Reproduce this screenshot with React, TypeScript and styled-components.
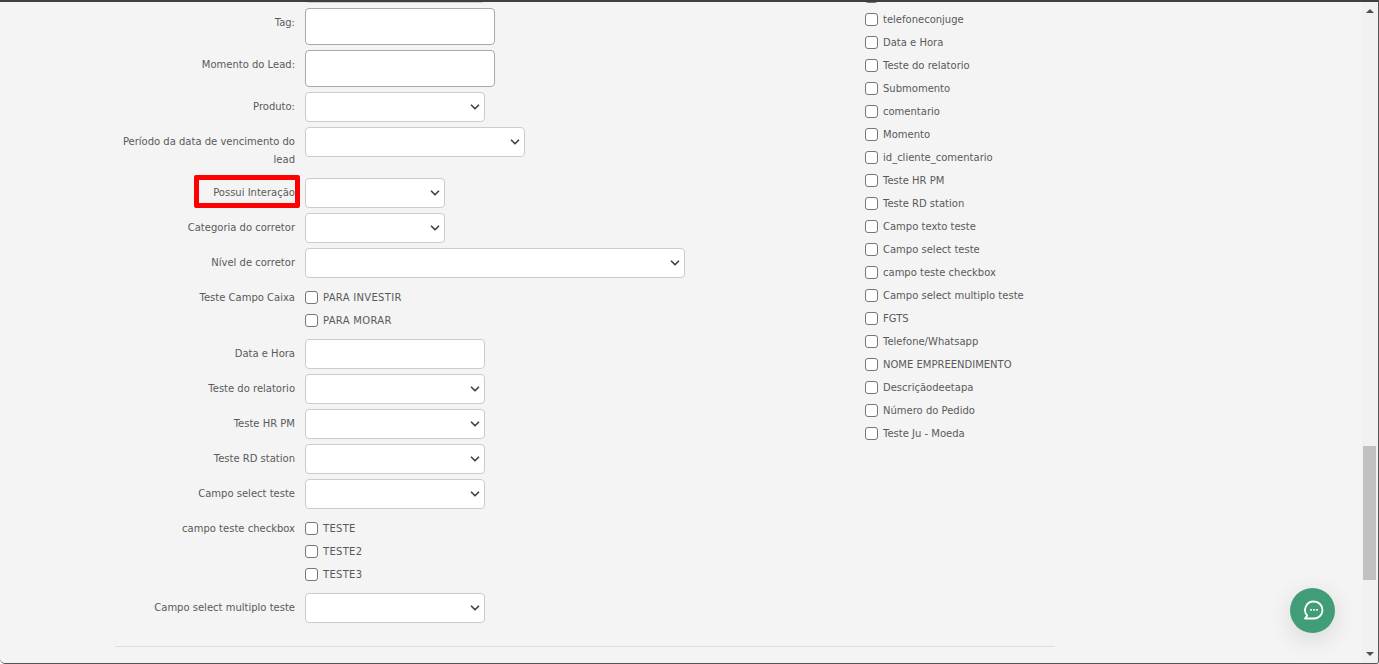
import React from "react";
import styled, { createGlobalStyle } from "styled-components";
import { ChevronDown } from "lucide-react";

const Global = createGlobalStyle`
  html, body { margin: 0; padding: 0; height: 100%; overflow: hidden; }
  #root { height: 100%; }
`;

const Frame = styled.div`
  height: 664px;
  box-sizing: border-box;
  display: flex;
  position: relative;
  overflow: hidden;
  background: #f4f4f4;
  border-top: 2px solid #3f3f3f;
  border-bottom: 1px solid #555;
  border-right: 1px solid #555;
  border-bottom-left-radius: 5px;
  border-bottom-right-radius: 3px;
  font-family: "DejaVu Sans", Verdana, sans-serif;
  font-size: 10px;
  color: #5a5a5a;
`;

const Viewport = styled.div`
  flex: 1;
  min-width: 0;
  overflow: hidden;
`;

const Content = styled.div`
  width: 940px;
  margin: -29px 0 0 115px;
`;

const Columns = styled.div`
  display: grid;
  grid-template-columns: 750px 1fr;
`;

const FormColumn = styled.div`
  display: flex;
  flex-direction: column;
  gap: 5px;
`;

const Row = styled.div`
  display: flex;
  gap: 10px;
  align-items: flex-start;
`;

const Label = styled.div`
  position: relative;
  width: 180px;
  flex: none;
  box-sizing: border-box;
  padding: 6px 0 4px;
  text-align: right;
  line-height: 18px;
`;

const Highlight = styled.span`
  position: absolute;
  top: -3px;
  right: -5px;
  width: 106px;
  height: 33px;
  box-sizing: border-box;
  border: 5px solid #f00;
  border-radius: 2px;
  pointer-events: none;
`;

const TextInput = styled.input<{ $w: number; $h: number; $strong?: boolean }>`
  display: block;
  box-sizing: border-box;
  width: ${(p) => p.$w}px;
  height: ${(p) => p.$h}px;
  padding: 0 8px;
  background: #fff;
  border: 1px solid ${(p) => (p.$strong ? "#a9a9a9" : "#ccc")};
  border-radius: 4px;
  outline: none;
`;

const SelectWrap = styled.div<{ $w: number }>`
  position: relative;
  width: ${(p) => p.$w}px;
  height: 30px;
  svg {
    position: absolute;
    top: 8px;
    right: 3px;
    color: #444;
    pointer-events: none;
  }
`;

const NativeSelect = styled.select`
  display: block;
  appearance: none;
  box-sizing: border-box;
  width: 100%;
  height: 100%;
  background: #fff;
  border: 1px solid #ccc;
  border-radius: 4px;
  outline: none;
`;

const CheckGroup = styled.div`
  display: flex;
  flex-direction: column;
  gap: 5px;
  padding: 5px 0;
`;

const CheckItem = styled.label`
  display: flex;
  align-items: center;
  gap: 5px;
  height: 18px;
  white-space: nowrap;
`;

const CheckText = styled.span<{ $spaced?: boolean }>`
  padding-top: 2px;
  line-height: 18px;
  letter-spacing: ${(p) => (p.$spaced ? "0.3px" : "normal")};
`;

const CheckBox = styled.input.attrs({ type: "checkbox" })`
  appearance: none;
  flex: none;
  width: 13px;
  height: 13px;
  margin: 0;
  background: #fff;
  border: 1px solid #767676;
  border-radius: 3px;
`;

const SideList = styled.div`
  display: flex;
  flex-direction: column;
  gap: 5px;
  margin-top: 14px;
`;

const Divider = styled.hr`
  margin: 23px 0 0;
  border: 0;
  border-top: 1px solid #ddd;
`;

const Scrollbar = styled.div`
  position: relative;
  flex: none;
  width: 16px;
  background: #f1f1f1;
`;

const Arrow = styled.span<{ $down?: boolean }>`
  position: absolute;
  left: 4px;
  width: 0;
  height: 0;
  border-left: 4px solid transparent;
  border-right: 4px solid transparent;
  ${(p) =>
    p.$down
      ? "bottom: 7px; border-top: 4px solid #505050;"
      : "top: 7px; border-bottom: 4px solid #505050;"}
`;

const Thumb = styled.div`
  position: absolute;
  left: 1px;
  top: 444px;
  width: 13px;
  height: 134px;
  background: #c1c1c1;
`;

const ChatButton = styled.button`
  position: absolute;
  left: 1290px;
  top: 586px;
  width: 45px;
  height: 45px;
  padding: 0;
  display: flex;
  align-items: center;
  justify-content: center;
  border: 0;
  border-radius: 50%;
  background: #419c78;
  color: #fff;
  box-shadow: 0 6px 24px rgba(0, 0, 0, 0.12);
`;

const ChatIcon = () => (
  <svg width="24" height="24" viewBox="0 0 24 24" fill="none" stroke="currentColor" strokeWidth="1.8" strokeLinejoin="round">
    <path d="M13 2.5a8.5 8.5 0 1 1 0 17H4l2.2-2.9A8.5 8.5 0 0 1 13 2.5z" />
    <g fill="currentColor" stroke="none">
      <rect x="9.2" y="10" width="1.7" height="1.7" />
      <rect x="12.2" y="10" width="1.7" height="1.7" />
      <rect x="15.2" y="10" width="1.7" height="1.7" />
    </g>
  </svg>
);

const Select = ({ w }: { w: number }) => (
  <SelectWrap $w={w}>
    <NativeSelect />
    <ChevronDown size={14} strokeWidth={3} />
  </SelectWrap>
);

const Checks = ({ items }: { items: string[] }) => (
  <CheckGroup>
    {items.map((t) => (
      <CheckItem key={t}>
        <CheckBox />
        <CheckText $spaced>{t}</CheckText>
      </CheckItem>
    ))}
  </CheckGroup>
);

const side = [
  "",
  "telefoneconjuge",
  "Data e Hora",
  "Teste do relatorio",
  "Submomento",
  "comentario",
  "Momento",
  "id_cliente_comentario",
  "Teste HR PM",
  "Teste RD station",
  "Campo texto teste",
  "Campo select teste",
  "campo teste checkbox",
  "Campo select multiplo teste",
  "FGTS",
  "Telefone/Whatsapp",
  "NOME EMPREENDIMENTO",
  "Descriçãodeetapa",
  "Número do Pedido",
  "Teste Ju - Moeda",
];

export default function App() {
  return (
    <Frame>
      <Global />
      <Viewport>
        <Content>
          <Columns>
            <FormColumn>
              <Row>
                <Label />
                <Select w={180} />
              </Row>
              <Row>
                <Label>Tag:</Label>
                <TextInput $w={190} $h={37} $strong />
              </Row>
              <Row>
                <Label>Momento do Lead:</Label>
                <TextInput $w={190} $h={37} $strong />
              </Row>
              <Row>
                <Label>Produto:</Label>
                <Select w={180} />
              </Row>
              <Row>
                <Label>Período da data de vencimento do lead</Label>
                <Select w={220} />
              </Row>
              <Row>
                <Label>
                  Possui Interação
                  <Highlight />
                </Label>
                <Select w={140} />
              </Row>
              <Row>
                <Label>Categoria do corretor</Label>
                <Select w={140} />
              </Row>
              <Row>
                <Label>Nível de corretor</Label>
                <Select w={380} />
              </Row>
              <Row>
                <Label>Teste Campo Caixa</Label>
                <Checks items={["PARA INVESTIR", "PARA MORAR"]} />
              </Row>
              <Row>
                <Label>Data e Hora</Label>
                <TextInput $w={180} $h={30} />
              </Row>
              <Row>
                <Label>Teste do relatorio</Label>
                <Select w={180} />
              </Row>
              <Row>
                <Label>Teste HR PM</Label>
                <Select w={180} />
              </Row>
              <Row>
                <Label>Teste RD station</Label>
                <Select w={180} />
              </Row>
              <Row>
                <Label>Campo select teste</Label>
                <Select w={180} />
              </Row>
              <Row>
                <Label>campo teste checkbox</Label>
                <Checks items={["TESTE", "TESTE2", "TESTE3"]} />
              </Row>
              <Row>
                <Label>Campo select multiplo teste</Label>
                <Select w={180} />
              </Row>
            </FormColumn>
            <SideList>
              {side.map((t, i) => (
                <CheckItem key={i}>
                  <CheckBox />
                  <CheckText>{t}</CheckText>
                </CheckItem>
              ))}
            </SideList>
          </Columns>
          <Divider />
        </Content>
      </Viewport>
      <Scrollbar>
        <Arrow />
        <Thumb />
        <Arrow $down />
      </Scrollbar>
      <ChatButton aria-label="Chat">
        <ChatIcon />
      </ChatButton>
    </Frame>
  );
}
